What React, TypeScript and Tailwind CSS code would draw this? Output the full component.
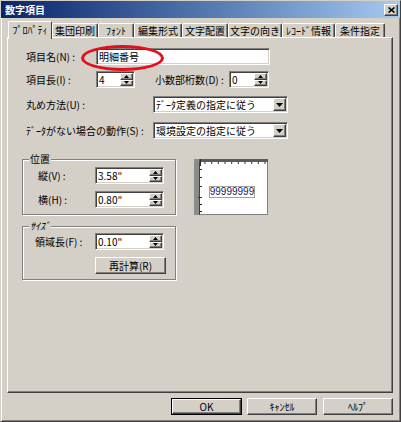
import React from "react";

const sunken =
  "border border-t-[#808080] border-l-[#808080] border-r-white border-b-white shadow-[inset_1px_1px_0_#404040,inset_-1px_-1px_0_#d4d0c8]";
const raised =
  "border border-t-white border-l-white border-r-[#404040] border-b-[#404040] shadow-[inset_-1px_-1px_0_#808080] bg-[#d4d0c8]";

function Spin() {
  return (
    <div className="flex h-full w-[13px] flex-col">
      <div className={`${raised} flex flex-1 items-center justify-center`}>
        <svg width="5" height="3" viewBox="0 0 5 3">
          <polygon points="0,3 2.5,0 5,3" fill="#000" />
        </svg>
      </div>
      <div className={`${raised} flex flex-1 items-center justify-center`}>
        <svg width="5" height="3" viewBox="0 0 5 3">
          <polygon points="0,0 5,0 2.5,3" fill="#000" />
        </svg>
      </div>
    </div>
  );
}

function Field({ w, value, spin }: { w: string; value: string; spin?: boolean }) {
  return (
    <div className={`${sunken} ${w} flex h-[17px] bg-white p-[1px]`}>
      <span className="flex-1 pl-[1px] leading-[13px]">{value}</span>
      {spin && <Spin />}
    </div>
  );
}

function Select({ value }: { value: string }) {
  return (
    <div className={`${sunken} flex h-[17px] w-[135px] bg-white p-[1px]`}>
      <span className="flex-1 pl-[1px] leading-[13px]">{value}</span>
      <div className={`${raised} flex w-[13px] items-center justify-center`}>
        <svg width="7" height="4" viewBox="0 0 7 4">
          <polygon points="0,0 7,0 3.5,4" fill="#000" />
        </svg>
      </div>
    </div>
  );
}

function Button({ label, w }: { label: string; w: string }) {
  return (
    <div className={`${raised} ${w} flex h-[17px] items-center justify-center`}>{label}</div>
  );
}

const tabs = [
  { t: "ﾌﾟﾛﾊﾟﾃｨ", w: "w-[44px]" },
  { t: "集団印刷", w: "w-[46px]" },
  { t: "ﾌｫﾝﾄ", w: "w-[36px]" },
  { t: "編集形式", w: "w-[48px]" },
  { t: "文字配置", w: "w-[46px]" },
  { t: "文字の向き", w: "w-[54px]" },
  { t: "ﾚｺｰﾄﾞ情報", w: "w-[53px]" },
  { t: "条件指定", w: "w-[50px]" },
];

function Preview() {
  const topTicks = [11, 17.7, 24.3, 31, 37.7, 44.3, 51, 57.7, 64.3, 71];
  const leftTicks = [10, 18, 27, 45, 52];
  return (
    <div className="relative ml-[18px] flex h-[56px] w-[74px] bg-white pl-[15px] pt-[27px]">
      <svg className="absolute inset-0" width="74" height="56" viewBox="0 0 74 56">
        <rect x="0" y="0" width="74" height="56" fill="none" stroke="#808080" strokeWidth="2" />
        <rect x="0" y="0" width="74" height="3" fill="#5a5a5a" />
        <rect x="0" y="0" width="5" height="56" fill="#8c8c8c" />
        <line x1="5.5" y1="3" x2="5.5" y2="56" stroke="#404040" />
        <line x1="6.5" y1="0" x2="6.5" y2="7" stroke="#303030" />
        {topTicks.map((x) => (
          <line key={x} x1={x} y1="3" x2={x} y2="5" stroke="#303030" />
        ))}
        {leftTicks.map((y) => (
          <line key={y} x1="5" y1={y + 0.5} x2="8" y2={y + 0.5} stroke="#303030" />
        ))}
        <line x1="4" y1="38.5" x2="8" y2="38.5" stroke="#303030" />
      </svg>
      <div className="relative flex h-[12px] w-[46px] items-center justify-center border border-[#a0a0a0] font-['Liberation_Sans',sans-serif] text-[10px] leading-[10px] text-[#202060]">
        99999999
      </div>
    </div>
  );
}

export default function App() {
  return (
    <div className="relative flex h-[422px] w-[401px] flex-col border border-t-[#d4d0c8] border-l-[#d4d0c8] border-r-[#404040] border-b-[#404040] bg-[#d4d0c8] font-['Noto_Sans_CJK_JP',sans-serif] text-[10px] text-black shadow-[inset_1px_1px_0_white,inset_-1px_-1px_0_#808080]">
      {/* title bar */}
      <div className="flex h-[17px] items-center bg-linear-to-r from-[#0a246a] to-[#a6caf0] pl-[4px] pr-[2px]">
        <span className="flex-1 text-[10px] font-bold text-white">数字項目</span>
        <div className={`${raised} flex h-[12px] w-[14px] items-center justify-center`}>
          <svg width="7" height="6" viewBox="0 0 7 6">
            <path d="M0.5 0.5 L6.5 5.5 M6.5 0.5 L0.5 5.5" stroke="#000" strokeWidth="1.6" />
          </svg>
        </div>
      </div>

      {/* tabs */}
      <div className="ml-[7px] mt-[3px] flex h-[16px] items-end">
        {tabs.map((tab, i) =>
          i === 0 ? (
            <div
              key={tab.t}
              className={`${tab.w} relative z-10 -mb-[2px] flex h-[18px] items-start justify-center rounded-t-[2px] border-t border-l border-r border-t-white border-l-white border-r-[#404040] bg-[#d4d0c8] pt-[2px] leading-[12px]`}
            >
              {tab.t}
            </div>
          ) : (
            <div
              key={tab.t}
              className={`${tab.w} flex h-[14px] items-center justify-center rounded-t-[2px] border-t border-l border-r border-t-white border-l-white border-r-[#404040] shadow-[inset_-1px_0_0_#808080] leading-[12px]`}
            >
              {tab.t}
            </div>
          )
        )}
      </div>

      {/* panel */}
      <div className="ml-[6px] flex h-[356px] w-[386px] flex-col border border-t-white border-l-white border-r-[#404040] border-b-[#404040] pl-[14px] pt-[10px] shadow-[inset_-1px_-1px_0_#808080]">
        <div className="flex h-[17px] items-center pl-[4px]">
          <span className="w-[70px]">項目名(N) :</span>
          <Field w="w-[174px]" value="明細番号" />
        </div>
        <div className="mt-[6px] flex h-[17px] items-center pl-[4px]">
          <span className="w-[70px]">項目長(I) :</span>
          <Field w="w-[39px]" value="4" spin />
          <span className="ml-[20px] w-[74px]">小数部桁数(D) :</span>
          <Field w="w-[40px]" value="0" spin />
        </div>
        <div className="mt-[8px] flex h-[17px] items-center pl-[4px]">
          <span className="w-[127px]">丸め方法(U) :</span>
          <Select value="ﾃﾞｰﾀ定義の指定に従う" />
        </div>
        <div className="mt-[9px] flex h-[17px] items-center pl-[4px]">
          <span className="w-[127px]">ﾃﾞｰﾀがない場合の動作(S) :</span>
          <Select value="環境設定の指定に従う" />
        </div>

        <div className="mt-[20px] flex items-start">
          <div className="flex w-[154px] flex-col">
            <div className="relative flex h-[56px] flex-col border border-[#808080] pl-[14px] pt-[7px] shadow-[inset_1px_1px_0_white,1px_1px_0_white]">
              <span className="absolute -top-[7px] left-[6px] bg-[#d4d0c8] px-[1px] leading-[12px]">位置</span>
              <div className="flex h-[17px] items-center">
                <span className="w-[58px] pl-[1px]">縦(V) :</span>
                <Field w="w-[69px]" value={'3.58"'} spin />
              </div>
              <div className="mt-[7px] flex h-[17px] items-center">
                <span className="w-[58px] pl-[1px]">横(H) :</span>
                <Field w="w-[69px]" value={'0.80"'} spin />
              </div>
            </div>
            <div className="relative mt-[11px] flex h-[54px] flex-col border border-[#808080] pl-[12px] pt-[6px] shadow-[inset_1px_1px_0_white,1px_1px_0_white]">
              <span className="absolute -top-[7px] left-[6px] bg-[#d4d0c8] px-[1px] italic leading-[12px]">ｻｲｽﾞ</span>
              <div className="flex h-[17px] items-center">
                <span className="w-[60px]">領域長(F) :</span>
                <Field w="w-[69px]" value={'0.10"'} spin />
              </div>
              <div className="ml-[60px] mt-[7px]">
                <Button label="再計算(R)" w="w-[71px]" />
              </div>
            </div>
          </div>
          <Preview />
        </div>
      </div>

      {/* dialog buttons */}
      <div className="ml-[170px] mt-[5px] flex">
        <div className="h-[17px] w-[71px] border border-black">
          <div className="flex h-full w-full items-center justify-center border border-t-white border-l-white border-r-[#404040] border-b-[#404040] shadow-[inset_-1px_-1px_0_#808080]">
            OK
          </div>
        </div>
        <div className="ml-[5px]">
          <Button label="ｷｬﾝｾﾙ" w="w-[70px]" />
        </div>
        <div className="ml-[6px]">
          <Button label="ﾍﾙﾌﾟ" w="w-[70px]" />
        </div>
      </div>

      {/* red annotation ellipse */}
      <div className="absolute left-[80px] top-[44px] h-[26px] w-[83px] rounded-[50%] border-[3px] border-[#e3101c]" />
    </div>
  );
}
